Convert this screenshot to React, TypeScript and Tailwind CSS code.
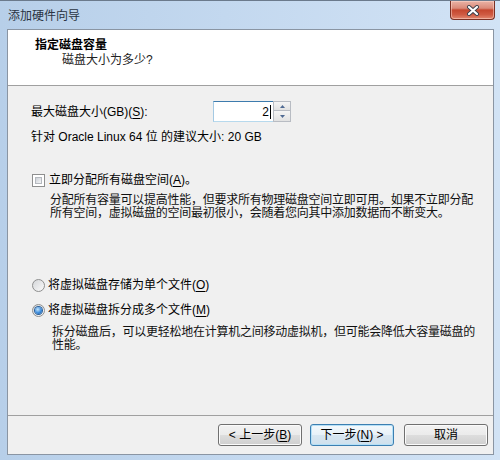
import React from 'react';

const U: React.FC<{ children: React.ReactNode }> = ({ children }) => (
  <span className="underline underline-offset-[2px] decoration-1">{children}</span>
);

const Radio: React.FC<{ checked?: boolean }> = ({ checked }) => (
  <span className="flex h-[13px] w-[13px] shrink-0 items-center justify-center rounded-full border border-[#8e8f8f] bg-[linear-gradient(135deg,#d4d6d9,#fafafa)]">
    {checked && (
      <span className="h-[7px] w-[7px] rounded-full bg-[radial-gradient(circle_at_40%_35%,#c4e6fc_0%,#3b8bdc_55%,#0f4f94_100%)] shadow-[0_0_0_1px_#2a5f99]" />
    )}
  </span>
);

const Button: React.FC<{ children: React.ReactNode; focused?: boolean; className?: string }> = ({
  children,
  focused,
  className,
}) => (
  <button
    className={
      'flex h-[22px] w-[84px] items-center justify-center rounded-[3px] border text-[12px] leading-none text-black ' +
      (focused
        ? 'border-[#3c7fb1] bg-[linear-gradient(to_bottom,#f4f9fc_0%,#e7f1f8_50%,#d7e6f1_51%,#cfe0ec_100%)] shadow-[inset_0_0_0_1px_#b5e0f7] '
        : 'border-[#707070] bg-[linear-gradient(to_bottom,#f2f2f2_0%,#ebebeb_50%,#dddddd_51%,#cfcfcf_100%)] shadow-[inset_0_0_0_1px_#fbfbfb] ') +
      (className ?? '')
    }
  >
    {children}
  </button>
);

export default function App() {
  return (
    <div className="flex h-[460px] w-[500px] flex-col overflow-hidden border-t border-[#6b7a8c] bg-[linear-gradient(to_right,#b7cfe9_0%,#c3d8ef_45%,#d2e3f5_100%)] font-['Liberation_Sans','Noto_Sans_CJK_SC',sans-serif] text-[12px] text-black">
      {/* title bar */}
      <div className="relative h-[28px] shrink-0">
        <div className="pl-[8px] pt-[7px] text-[12px] leading-[16px] text-[#2a3442]">添加硬件向导</div>
        <div className="absolute left-[450px] top-0 flex h-[19px] w-[45px] items-center justify-center rounded-b-[4px] border border-t-0 border-[#7a3024] bg-[linear-gradient(to_bottom,#eab3a6_0%,#da8a79_40%,#c5472f_50%,#cf5a42_75%,#e2876f_100%)] shadow-[inset_0_0_0_1px_rgba(255,220,210,0.5)]">
          <svg width="14" height="11" viewBox="0 0 14 11">
            <path d="M3 2 L11 9 M11 2 L3 9" stroke="#3a3f4a" strokeWidth="4" strokeLinecap="round" />
            <path d="M3 2 L11 9 M11 2 L3 9" stroke="#ffffff" strokeWidth="2.2" strokeLinecap="round" />
          </svg>
        </div>
      </div>

      {/* client area */}
      <div className="ml-[7px] flex h-[426px] w-[487px] flex-col border border-[#8a95a3] bg-[#f0f0f0]">
        {/* header */}
        <div className="h-[56px] shrink-0 border-b border-[#a0a0a0] bg-white pt-[8px] leading-[15px]">
          <div className="pl-[27px] font-bold text-black">指定磁盘容量</div>
          <div className="pl-[54px] text-[#222]">磁盘大小为多少?</div>
        </div>

        {/* body */}
        <div className="flex h-[330px] shrink-0 flex-col border-b border-[#a0a0a0]">
          <div className="ml-[23px] mt-[15px] flex h-[21px] items-center">
            <span className="w-[182px] leading-[16px]">
              最大磁盘大小(GB)(<U>S</U>):
            </span>
            <div className="flex h-[21px] w-[60px] items-center justify-end border-b border-l border-t border-b-[#b7d9ed] border-l-[#a4c9e3] border-t-[#3d7bad] bg-white pr-[2px]">
              <span className="leading-[16px]">2</span>
              <span className="ml-px h-[14px] w-px bg-black" />
            </div>
            <div className="flex h-[21px] w-[18px] flex-col">
              <div className="flex h-[10px] items-center justify-center border border-[#b8bcc3] bg-[linear-gradient(to_bottom,#f5f5f5,#e2e2e2)]">
                <svg width="5" height="3" viewBox="0 0 5 3">
                  <path d="M0 3 L2.5 0 L5 3 Z" fill="#4f6a93" />
                </svg>
              </div>
              <div className="flex h-[11px] items-center justify-center border border-t-0 border-[#b8bcc3] bg-[linear-gradient(to_bottom,#f5f5f5,#e2e2e2)]">
                <svg width="5" height="3" viewBox="0 0 5 3">
                  <path d="M0 0 L5 0 L2.5 3 Z" fill="#4f6a93" />
                </svg>
              </div>
            </div>
          </div>

          <div className="ml-[23px] mt-[7px] leading-[16px]">针对 Oracle Linux 64 位 的建议大小: 20 GB</div>

          <div className="ml-[24px] mt-[27px] flex items-center gap-[4px] leading-[16px]">
            <span className="flex h-[13px] w-[13px] shrink-0 border border-[#8e8f8f] bg-white p-[2px]">
              <span className="h-full w-full border border-[#b5b9bf] bg-[linear-gradient(135deg,#cdd1d7,#f5f6f7)]" />
            </span>
            <span>
              立即分配所有磁盘空间(<U>A</U>)。
            </span>
          </div>

          <div className="ml-[42px] mt-[6px] whitespace-nowrap leading-[13px] tracking-[-0.25px] text-[#111]">
            <div>分配所有容量可以提高性能，但要求所有物理磁盘空间立即可用。如果不立即分配</div>
            <div>所有空间，虚拟磁盘的空间最初很小，会随着您向其中添加数据而不断变大。</div>
          </div>

          <div className="ml-[24px] mt-[57px] flex items-center gap-[3px] leading-[16px]">
            <Radio />
            <span>
              将虚拟磁盘存储为单个文件(<U>O</U>)
            </span>
          </div>

          <div className="ml-[24px] mt-[9px] flex items-center gap-[3px] leading-[16px]">
            <Radio checked />
            <span>
              将虚拟磁盘拆分成多个文件(<U>M</U>)
            </span>
          </div>

          <div className="ml-[44px] mt-[8px] whitespace-nowrap leading-[13px] tracking-[-0.25px] text-[#111]">
            <div>拆分磁盘后，可以更轻松地在计算机之间移动虚拟机，但可能会降低大容量磁盘的</div>
            <div>性能。</div>
          </div>
        </div>

        {/* footer */}
        <div className="flex flex-1 items-start justify-end pr-[5px] pt-[8px]">
          <Button>
            &lt; 上一步(<U>B</U>)
          </Button>
          <Button focused className="ml-[8px]">
            下一步(<U>N</U>) &gt;
          </Button>
          <Button className="ml-[10px]">取消</Button>
        </div>
      </div>
    </div>
  );
}
